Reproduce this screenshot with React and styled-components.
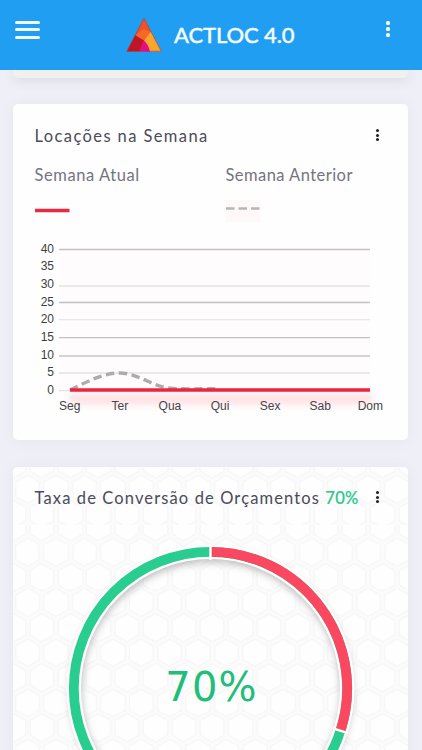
import React from 'react';
import styled, { createGlobalStyle } from 'styled-components';

const GlobalStyle = createGlobalStyle`
    * {
        box-sizing: border-box;
    }
    body {
        margin: 0;
        background: #eff0f7;
        font-family: Lato, 'Liberation Sans', sans-serif;
    }
`;

const hexTile = encodeURIComponent(
    `<svg xmlns="http://www.w3.org/2000/svg" width="28.4" height="50.2" viewBox="0 0 28.4 50.2">
        <rect width="28.4" height="50.2" fill="#fbfbfb"/>
        <g fill="#fefefe" stroke="#f7f7f8" stroke-width="1.2">
            <path d="M14.2-1.3 26.2 5.5V19.6L14.2 26.4 2.2 19.6V5.5Z"/>
            <path d="M0 23.8 12 30.6V44.7L0 51.5-12 44.7V30.6Z"/>
            <path d="M28.4 23.8 40.4 30.6V44.7L28.4 51.5 16.4 44.7V30.6Z"/>
            <path d="M0-26.4 12-19.6V-5.5L0 1.3-12-5.5V-19.6Z"/>
            <path d="M28.4-26.4 40.4-19.6V-5.5L28.4 1.3 16.4-5.5V-19.6Z"/>
            <path d="M14.2 48.9 26.2 55.7V69.8L14.2 76.6 2.2 69.8V55.7Z"/>
        </g>
    </svg>`
);

const Page = styled.div`
    width: 100%;
    height: 750px;
    overflow: hidden;
    display: flex;
    flex-direction: column;
`;

const Header = styled.header`
    flex: none;
    height: 70px;
    padding: 0 30px 0 15px;
    display: flex;
    align-items: center;
    justify-content: space-between;
    background: #209ef2;
`;

const MenuButton = styled.button`
    width: 25px;
    height: 18px;
    margin-bottom: 11px;
    padding: 0;
    border: 0;
    background: none;
    display: flex;
    flex-direction: column;
    justify-content: space-between;
    span {
        width: 100%;
        height: 3px;
        border-radius: 1.5px;
        background: #f4fbff;
    }
`;

const Brand = styled.div`
    display: flex;
    align-items: center;
    gap: 12px;
    margin: 0 5px 1px 0;
`;

const BrandName = styled.h1`
    margin: 0;
    width: 121px;
    font-size: 22px;
    line-height: 28px;
    font-weight: 500;
    letter-spacing: ${({ $spacing }) => $spacing};
    color: #f4fbff;
    white-space: nowrap;
    -webkit-text-stroke: 0.4px #f4fbff;
`;

const Dots = styled.button`
    flex: none;
    width: ${({ $size }) => $size}px;
    height: ${({ $height }) => $height}px;
    margin: ${({ $margin }) => $margin || 0};
    padding: 0;
    border: 0;
    background: none;
    display: flex;
    flex-direction: column;
    justify-content: space-between;
    span {
        height: ${({ $size }) => $size}px;
        border-radius: ${({ $radius }) => $radius};
        background: ${({ $color }) => $color};
    }
`;

const Content = styled.main`
    flex: 1;
    min-height: 0;
    padding: 0 14px 0 13px;
    display: flex;
    flex-direction: column;
    gap: 26px;
    overflow: hidden;
`;

const Card = styled.section`
    flex: none;
    height: ${({ $height }) => $height}px;
    border-radius: 5px;
    background: #fefefe;
    box-shadow: 0 1px 14px rgba(70, 75, 110, 0.07);
    overflow: hidden;
`;

const PreviousCard = styled(Card)`
    border-radius: 0 0 5px 5px;
    background: #f0f0f1;
    box-shadow: 0 2px 12px rgba(40, 40, 70, 0.14);
`;

const CardHead = styled.div`
    display: flex;
    justify-content: space-between;
    height: ${({ $height }) => $height}px;
    padding: ${({ $top }) => $top}px 29px 0 21.5px;
    ${({ $pattern }) =>
        $pattern &&
        `background: url("data:image/svg+xml,${hexTile}") 14.7px 34.6px / 28.4px 50.2px;`}
`;

const Title = styled.h2`
    margin: 0;
    font-size: 16.5px;
    line-height: 24px;
    font-weight: 400;
    letter-spacing: ${({ $spacing }) => $spacing};
    color: #4b4b59;
    white-space: nowrap;
    b {
        font-weight: 500;
        letter-spacing: 0.3px;
        color: #2cc98a;
        -webkit-text-stroke: 0.2px #2cc98a;
    }
`;

const Legend = styled.div`
    display: grid;
    grid-template-columns: 191px 1fr;
    padding-left: 21.5px;
`;

const LegendItem = styled.div`
    font-size: 16.5px;
    line-height: 22px;
    letter-spacing: ${({ $spacing }) => $spacing};
    color: #74747f;
    white-space: nowrap;
`;

const Swatch = styled.svg`
    display: block;
    margin-top: 14px;
`;

const Chart = styled.svg`
    display: block;
    margin-top: 10px;
    font-family: 'Liberation Sans', Arial, sans-serif;
    font-size: 12px;
`;

const DonutArea = styled.div`
    height: 300px;
    background: url('data:image/svg+xml,${hexTile}') 14.7px 39.9px / 28.4px 50.2px;
`;

const DonutCard = styled(Card)`
    margin-top: 1px;
`;

const ticks = [
    { value: 40, y: 249.5, color: '#c2c2c4' },
    { value: 35, y: 267.5, color: 'none' },
    { value: 30, y: 286, color: '#e2e2e4' },
    { value: 25, y: 302.5, color: '#c2c2c4' },
    { value: 20, y: 319.7, color: '#e8e8ea' },
    { value: 15, y: 337.6, color: '#c2c2c4' },
    { value: 10, y: 356, color: '#c6c6c8' },
    { value: 5, y: 373, color: '#e2e2e4' },
    { value: 0, y: 390.7, color: '#e2e2e4' },
];

const days = ['Seg', 'Ter', 'Qua', 'Qui', 'Sex', 'Sab', 'Dom'];

const DotsMenu = (props) => (
    <Dots {...props}>
        <span />
        <span />
        <span />
    </Dots>
);

const Logo = () => (
    <svg width="36" height="36" viewBox="0 0 36 36">
        <defs>
            <clipPath id="logo">
                <path d="M18 1 35.5 34.5H.5Z" />
            </clipPath>
        </defs>
        <g clipPath="url(#logo)">
            <path d="M0 0h36v36H0z" fill="#f1572a" />
            <path d="M18 0 8 20 17 24 25 15Z" fill="#ef5228" />
            <path d="M8 20 17 24 25 15 17 12Z" fill="#f4682a" />
            <path d="M0 36 9 18 18 23.5 13 36Z" fill="#be1629" />
            <path d="M13 36 18 23.5 22 28 24.5 36Z" fill="#ec078b" />
            <path d="M18 23.5 25.5 14 37 36H24.5C23 30 21 26 18 23.5Z" fill="#f9a631" />
        </g>
        <path
            d="M18 1.3 35.2 34.2H.8Z"
            fill="none"
            stroke="#8d4a46"
            strokeOpacity=".6"
        />
    </svg>
);

const WeekChart = () => (
    <Chart width="395" height="200" viewBox="13 234 395 200">
        <defs>
            <filter id="glow" x="-5%" y="-100%" width="110%" height="300%">
                <feGaussianBlur stdDeviation="3" />
            </filter>
        </defs>
        <rect x="59" y="249" width="311" height="142" fill="#fefcfc" />
        {ticks.map(({ value, y, color }, i) => (
            <g key={value}>
                <path d={`M59 ${y}H370`} stroke={color} strokeWidth="1.3" />
                <text
                    x="54"
                    y={252.6 + i * 17.65}
                    textAnchor="end"
                    fill="#3f3f42"
                >
                    {value}
                </text>
            </g>
        ))}
        <rect
            x="70"
            y="393"
            width="302"
            height="12"
            fill="#ffccd3"
            opacity=".55"
            filter="url(#glow)"
        />
        <path
            d="M70 390C87 382 102 373 120 373S153 387 170 388.2 200 388.6 220 388.8"
            fill="none"
            stroke="#acacac"
            strokeWidth="3.4"
            strokeDasharray="8.5 4.5"
        />
        <path d="M70 390H370" stroke="#eb2540" strokeWidth="3.6" />
        {days.map((day, i) => (
            <text
                key={day}
                x={69.7 + i * 50.1}
                y="410"
                textAnchor="middle"
                fill="#454548"
            >
                {day}
            </text>
        ))}
    </Chart>
);

const Donut = () => (
    <svg width="395" height="300" viewBox="13 525 395 300">
        <defs>
            <filter id="shadow" x="-10%" y="-10%" width="120%" height="120%">
                <feGaussianBlur stdDeviation="4" />
            </filter>
        </defs>
        <g fill="none">
            <circle
                cx="211"
                cy="691.5"
                r="135.5"
                stroke="#000"
                strokeOpacity=".3"
                strokeWidth="10"
                filter="url(#shadow)"
            />
            <circle
                cx="210.5"
                cy="688.5"
                r="136.7"
                stroke="#fff"
                strokeWidth="14.5"
            />
            <circle
                cx="210.5"
                cy="688.5"
                r="136.7"
                stroke="#29cd8f"
                strokeWidth="9.8"
            />
            <path
                d="M210.5 551.8A136.7 136.7 0 0 1 340.5 730.7"
                stroke="#fb4860"
                strokeWidth="9.8"
            />
            <path
                d="M210.5 545V560M333 728.3 348 733.2"
                stroke="#fff"
                strokeWidth="2.4"
            />
        </g>
        <text
            x="211.5"
            y="700.5"
            textAnchor="middle"
            fontFamily="'DejaVu Sans', sans-serif"
            fontSize="40"
            letterSpacing="1.2"
            fill="#20bd7b"
        >
            70%
        </text>
    </svg>
);

const App = () => {
    const cardDots = { $size: 3, $height: 12, $radius: '50%', $color: '#222' };

    return (
        <Page>
            <GlobalStyle />
            <Header>
                <MenuButton>
                    <span />
                    <span />
                    <span />
                </MenuButton>
                <Brand>
                    <Logo />
                    <BrandName $spacing="-0.1px">ACTLOC 4.0</BrandName>
                </Brand>
                <DotsMenu
                    $size={4}
                    $height={16}
                    $radius="1.5px"
                    $color="#f4fbff"
                    $margin="0 2px 12px 0"
                />
            </Header>
            <Content>
                <PreviousCard $height={8} />
                <Card $height={336}>
                    <CardHead $height={60} $top={20}>
                        <Title $spacing="1.4px">Locações na Semana</Title>
                        <DotsMenu {...cardDots} $margin="5px 0 0" />
                    </CardHead>
                    <Legend>
                        <LegendItem $spacing="0.58px">
                            Semana Atual
                            <Swatch width="36" height="24">
                                <path d="M0 10.5H34.5" stroke="#e62b40" strokeWidth="3.6" />
                            </Swatch>
                        </LegendItem>
                        <LegendItem $spacing="0.45px">
                            Semana Anterior
                            <Swatch width="36" height="24">
                                <path d="M0 0H34.5V22H0Z" fill="#fff8f9" />
                                <path
                                    d="M0 8.5H34.5"
                                    stroke="#b9b4b6"
                                    strokeWidth="2.4"
                                    strokeDasharray="8.5 4"
                                />
                            </Swatch>
                        </LegendItem>
                    </Legend>
                    <WeekChart />
                </Card>
                <DonutCard $height={360}>
                    <CardHead $height={58} $top={19} $pattern>
                        <Title $spacing="1.12px">
                            Taxa de Conversão de Orçamentos <b>70%</b>
                        </Title>
                        <DotsMenu {...cardDots} $margin="5px 0 0" />
                    </CardHead>
                    <DonutArea>
                        <Donut />
                    </DonutArea>
                </DonutCard>
            </Content>
        </Page>
    );
};

export default App;
